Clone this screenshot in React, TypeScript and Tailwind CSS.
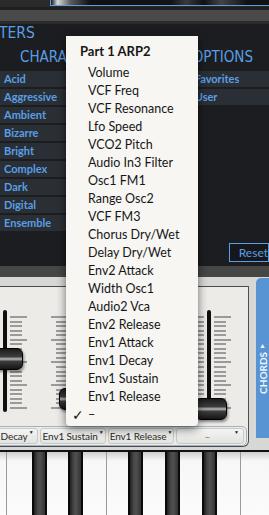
import React from "react";

const PRESETS = ["Acid", "Aggressive", "Ambient", "Bizarre", "Bright", "Complex", "Dark", "Digital", "Ensemble"];

const MENU = [
  "Volume",
  "VCF Freq",
  "VCF Resonance",
  "Lfo Speed",
  "VCO2 Pitch",
  "Audio In3 Filter",
  "Osc1 FM1",
  "Range Osc2",
  "VCF FM3",
  "Chorus Dry/Wet",
  "Delay Dry/Wet",
  "Env2 Attack",
  "Width Osc1",
  "Audio2 Vca",
  "Env2 Release",
  "Env1 Attack",
  "Env1 Decay",
  "Env1 Sustain",
  "Env1 Release",
];

const LABELS = ["Env1 Decay", "Env1 Sustain", "Env1 Release"];
const KNOBS = ["top-[61px]", "top-[101px]", "top-[70px]", "top-[111px]"];
const BLACK_KEYS = ["left-[32px]", "left-[68px]", "left-[128px]", "left-[165px]", "left-[202px]"];

function Ticks({ side }: { side: "left" | "right" }) {
  return (
    <div className={`flex flex-col justify-between h-[93px] w-[17px] ${side === "left" ? "items-end" : "items-start"}`}>
      {Array.from({ length: 21 }).map((_, i) => (
        <div key={i} className={`h-[2px] bg-[#9a9a98] ${i % 5 === 0 ? "w-[17px]" : "w-[12px]"}`} />
      ))}
    </div>
  );
}

function Slider({ knob }: { knob: string }) {
  return (
    <div className="relative w-[68px] h-[139px] flex justify-center shrink-0">
      <div className="mt-[29px]">
        <Ticks side="left" />
      </div>
      <div className="mx-[3px] mt-[23px] w-[4px] h-[102px] rounded-full bg-[#0e0e0e]" />
      <div className="mt-[29px]">
        <Ticks side="right" />
      </div>
      {/* knob */}
      <div
        className={`absolute left-[20px] ${knob} w-[32px] h-[22px] rounded-[6px] border border-black shadow-[1px_2px_3px_rgba(0,0,0,0.45)] bg-[linear-gradient(to_bottom,#1c1c1c,#3c3c3c_38%,#b8b8b8_50%,#3c3c3c_62%,#151515)]`}
      />
    </div>
  );
}

export default function App() {
  return (
    <div className="relative w-[269px] h-[515px] overflow-hidden bg-[#1c1d20] font-['Lato',sans-serif]">
      {/* TOP STRIP */}
      <div className="flex h-[7px] bg-[#2a2a2a]">
        <div className="w-[50px]" />
        <div className="flex-1 h-[6px] border-l border-b border-[#5a9de0] bg-[linear-gradient(to_right,#1a1a1a_0%,#d8d8d8_3%,#5a5a5a_9%,#111_18%,#141414_55%,#3a3a3a_62%,#111_70%,#444_78%,#121212_90%)]" />
      </div>
      <div className="h-[3px] bg-[#1f1f1f]" />
      <div className="h-[11px] bg-[#4a4a4a]" />
      <div className="h-[3px] bg-[#2b2b2b]" />

      {/* BROWSER PANEL */}
      <div className="h-[242px] flex flex-col bg-[#1c1d20]">
        <div className="h-[20px] flex items-center ml-[-1px] text-[15.5px] text-[#5a9ee4] font-['DejaVu_Sans',sans-serif] font-stretch-condensed">
          TERS
        </div>

        <div className="flex flex-1">
          {/* CHARACTERISTICS */}
          <div className="w-[197px] flex flex-col">
            <div className="h-[27px] flex items-center pl-[20px] text-[15px] text-[#5a9ee4] font-['DejaVu_Sans',sans-serif] font-stretch-condensed">
              CHARACTERISTICS
            </div>
            <div className="flex flex-col gap-[2px]">
              {PRESETS.map((p) => (
                <div
                  key={p}
                  className="h-[16px] flex items-center pl-[4px] bg-[#2a2f36] text-[11px] font-bold text-[#5a9ee4]"
                >
                  {p}
                </div>
              ))}
            </div>
          </div>

          {/* OPTIONS */}
          <div className="flex-1 flex flex-col border-l border-[#26282c]">
            <div className="h-[27px] flex items-center pl-[1px] text-[15px] text-[#5a9ee4] font-['DejaVu_Sans',sans-serif] font-stretch-condensed">
              OPTIONS
            </div>
            <div className="flex flex-col gap-[2px]">
              {["Favorites", "User"].map((o) => (
                <div
                  key={o}
                  className="h-[16px] flex items-center pl-[3px] bg-[#2a2f36] text-[11px] font-bold text-[#5a9ee4]"
                >
                  {o}
                </div>
              ))}
            </div>
            <div className="mt-auto mb-[4px] ml-[37px] h-[19px] border border-[#5a9ee4] bg-[#16171a] flex items-center pl-[9px] text-[12px] text-[#5a9ee4]">
              Reset
            </div>
          </div>
        </div>
      </div>

      {/* SLIDER SECTION */}
      <div className="h-[11px] bg-[#464646]" />
      <div className="h-[173px] bg-[#d7d7d5] flex items-start">
        <div className="mt-[9px] w-[249px] h-[161px] shrink-0 bg-[#ecebe8] border-t border-r border-b border-[#4c4c4c] rounded-br-[6px] flex flex-col overflow-hidden">
          <div className="flex ml-[-29px]">
            {KNOBS.map((k, i) => (
              <Slider key={i} knob={k} />
            ))}
          </div>
          <div className="ml-[-31px] w-[278px] h-[20px] border border-[#9fb1c6] rounded-[5px] flex items-center px-[1px]">
            {LABELS.map((l) => (
              <div
                key={l}
                className="w-[66px] mx-[1px] h-[16px] shrink-0 rounded-[3px] border border-[#c9c9c6] bg-[linear-gradient(to_bottom,#f4f4f2,#e3e3e0)] flex items-center justify-center whitespace-nowrap text-[10px] tracking-[-0.1px] text-[#2a2a2a]"
              >
                {l}
                <span className="self-start mt-[1px] ml-[1px] text-[5px] leading-none text-[#222]">▼</span>
              </div>
            ))}
            <div className="w-[68px] mx-[1px] h-[16px] shrink-0 rounded-[3px] border border-[#c9c9c6] bg-[linear-gradient(to_bottom,#f4f4f2,#e3e3e0)] flex items-center text-[10px] text-[#777]">
              <span className="flex-1 text-center pl-[4px]">–</span>
              <span className="self-start mt-[1px] mr-[4px] text-[5px] leading-none text-[#222]">▼</span>
            </div>
          </div>
        </div>

        {/* CHORDS TAB */}
        <div className="ml-[7px] mt-[1px] w-[13px] h-[160px] rounded-tl-[5px] bg-[#5893d3] flex flex-col items-center pt-[64px] text-[#eef4fb]">
          <span className="text-[7px] leading-none">▲</span>
          <span className="mt-[3px] [writing-mode:vertical-rl] rotate-180 text-[10px] font-bold leading-none">
            CHORDS
          </span>
        </div>
      </div>

      {/* KEYBOARD */}
      <div className="relative h-[65px] border-t-2 border-[#111] bg-[#111] overflow-hidden">
        <div className="flex ml-[-27px] h-full">
          {Array.from({ length: 9 }).map((_, i) => (
            <div
              key={i}
              className="w-[33.5px] shrink-0 h-full border-r border-[#9a9a9a] bg-[linear-gradient(to_bottom,#cfcfcf,#f7f7f7_14%,#fbfbfb)]"
            />
          ))}
        </div>
        {BLACK_KEYS.map((k) => (
          <div
            key={k}
            className={`absolute top-0 ${k} w-[15px] h-full border-x-2 border-[#0a0a0a] bg-[linear-gradient(to_right,#202020,#444_30%,#505050_55%,#333)]`}
          />
        ))}
      </div>

      {/* PARAMETER MENU */}
      <div className="absolute left-[66px] top-[36px] w-[132px] h-[390px] bg-[#f7f6f3] rounded-b-[4px] shadow-[0_3px_10px_rgba(0,0,0,0.55)] pt-[4px] text-[#161616]">
        <div className="h-[24px] flex items-center pl-[14px] text-[13px] font-bold">Part 1 ARP2</div>
        {MENU.map((m) => (
          <div key={m} className="h-[18px] flex items-center pl-[22px] text-[12.5px]">
            {m}
          </div>
        ))}
        <div className="relative h-[18px] flex items-center pl-[22px] text-[12.5px]">
          <span className="absolute left-[6px] text-[14px] font-['DejaVu_Sans',sans-serif]">✓</span>–
        </div>
      </div>
    </div>
  );
}
